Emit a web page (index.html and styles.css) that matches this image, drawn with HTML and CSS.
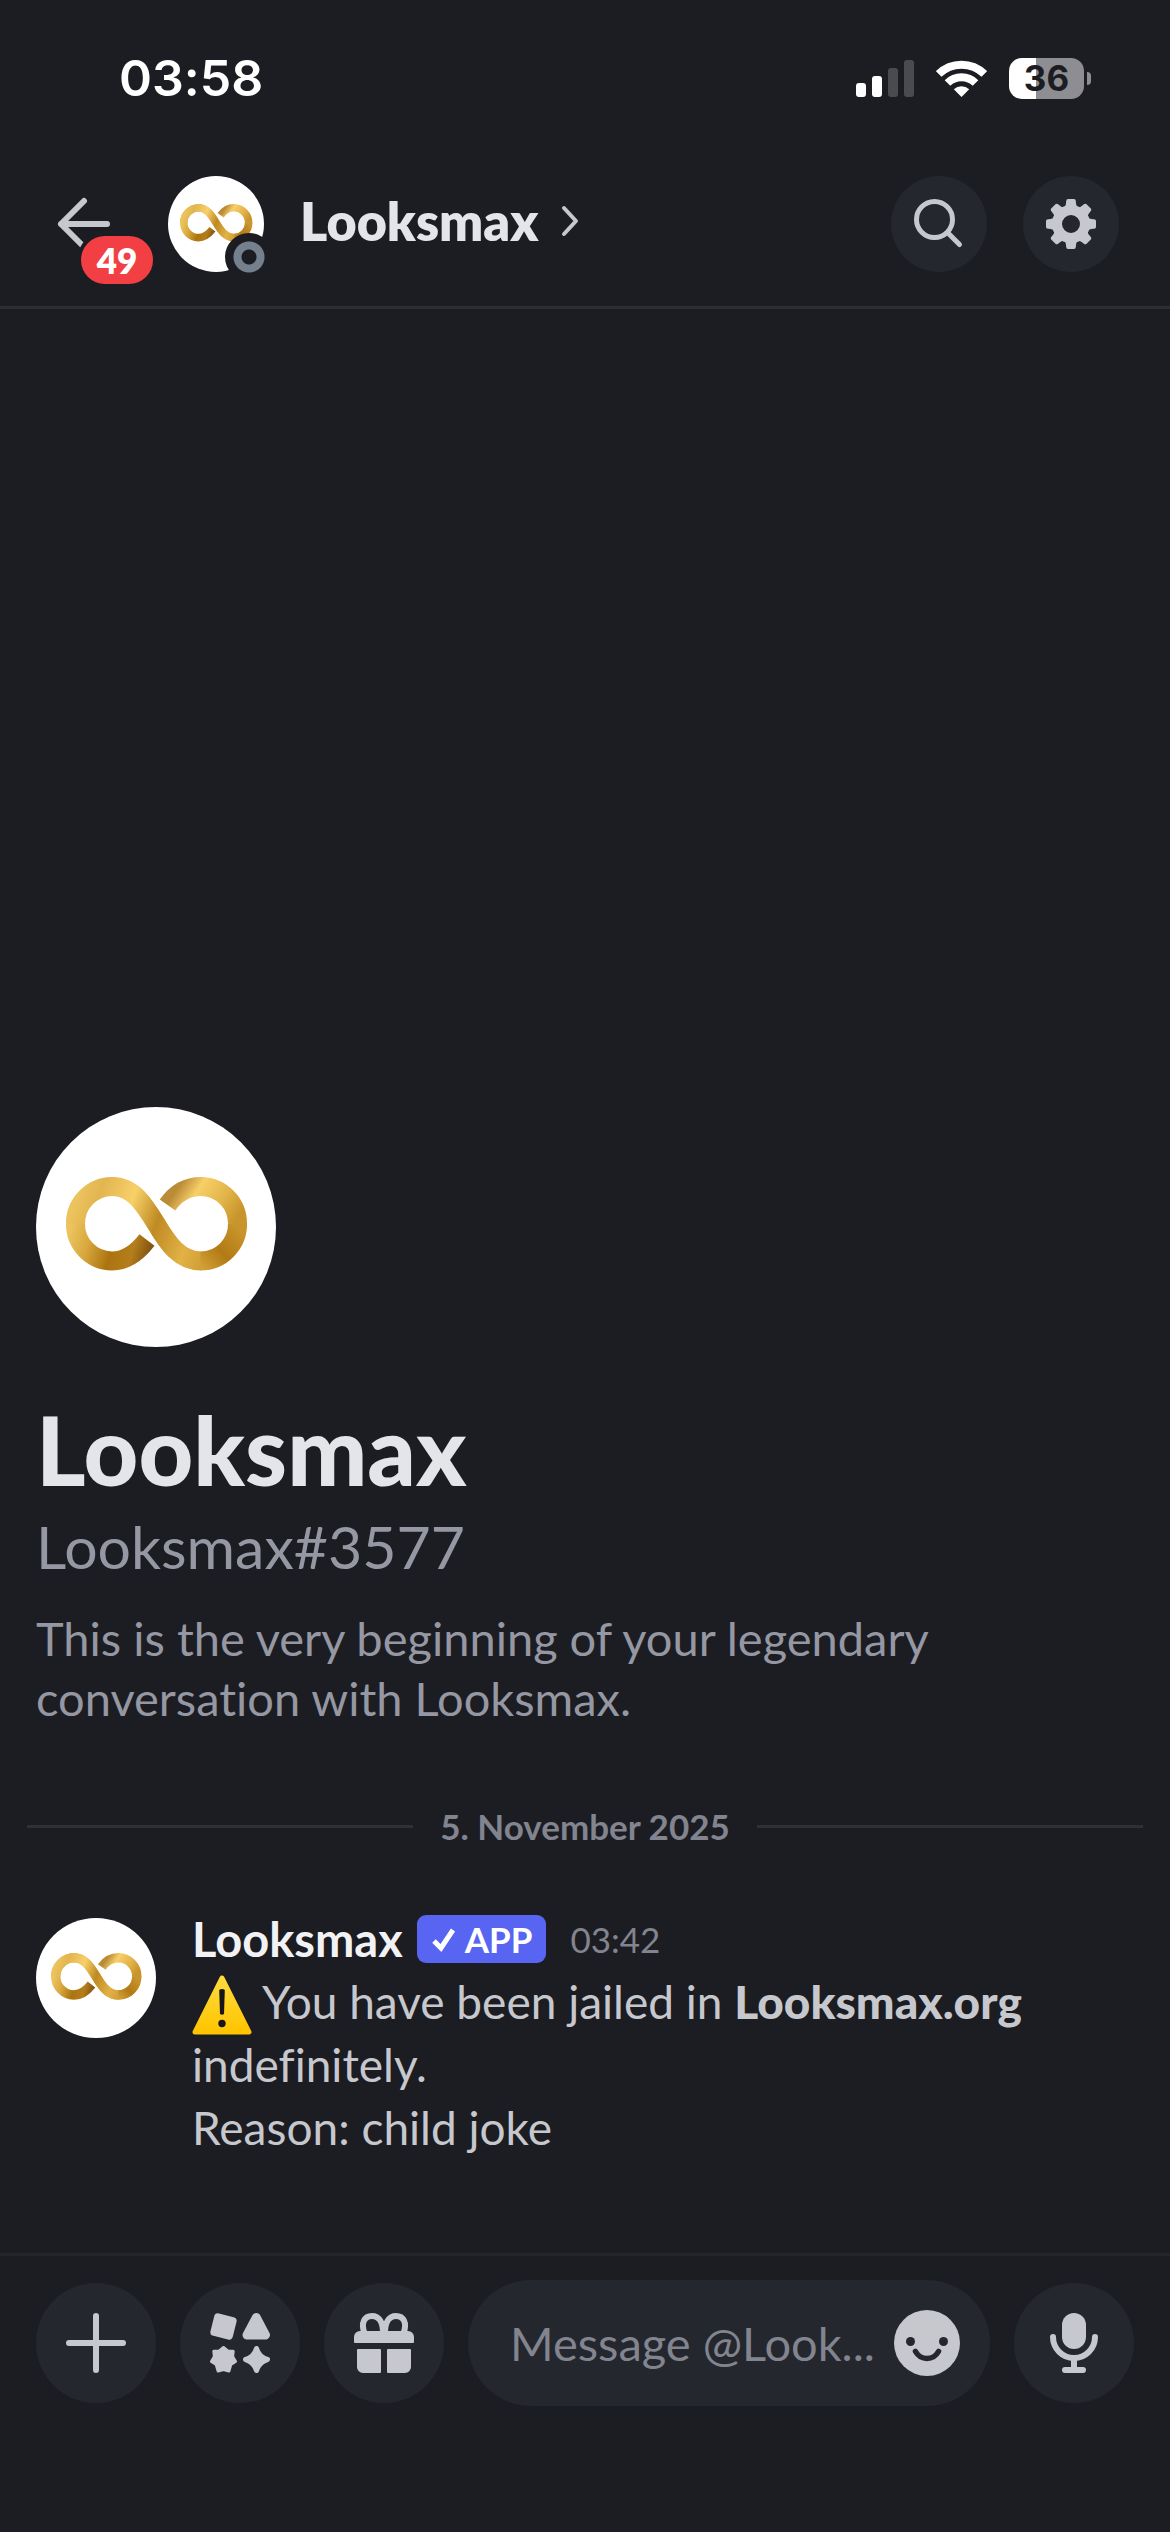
FILE: index.html
```html
<!DOCTYPE html>
<html lang="en">
<head>
<meta charset="utf-8">
<meta name="viewport" content="width=device-width, initial-scale=1">
<title>Looksmax</title>
<link rel="stylesheet" href="styles.css">
</head>
<body>
<svg class="defs" aria-hidden="true">
  <defs>
    <linearGradient id="gold-hook" gradientUnits="userSpaceOnUse" x1="36" y1="116" x2="115" y2="140">
      <stop offset="0" stop-color="#ecc45e"/><stop offset=".25" stop-color="#d9a83e"/><stop offset=".55" stop-color="#ab7410"/><stop offset=".8" stop-color="#b47e1c"/><stop offset="1" stop-color="#865510"/>
    </linearGradient>
    <linearGradient id="gold-band" gradientUnits="userSpaceOnUse" x1="36" y1="100" x2="168" y2="150">
      <stop offset="0" stop-color="#ecc45e"/><stop offset=".15" stop-color="#e2b550"/><stop offset=".38" stop-color="#f8d069"/><stop offset=".6" stop-color="#bf8a22"/><stop offset=".85" stop-color="#e2b246"/><stop offset="1" stop-color="#d2a036"/>
    </linearGradient>
    <linearGradient id="gold-low" gradientUnits="userSpaceOnUse" x1="160" y1="154" x2="206" y2="112">
      <stop offset="0" stop-color="#d2a036"/><stop offset=".4" stop-color="#b27a14"/><stop offset=".85" stop-color="#c8942c"/>
    </linearGradient>
    <linearGradient id="gold-high" gradientUnits="userSpaceOnUse" x1="202" y1="118" x2="128" y2="70">
      <stop offset=".05" stop-color="#c8942c"/><stop offset=".3" stop-color="#e2b44a"/><stop offset=".6" stop-color="#f7cf68"/><stop offset=".8" stop-color="#bb8c38"/>
    </linearGradient>
    <linearGradient id="warn" x1="0" y1="0" x2="0" y2="1">
      <stop offset="0" stop-color="#ffdc3c"/><stop offset="1" stop-color="#ffc400"/>
    </linearGradient>
    <symbol id="logo" viewBox="0 0 240 240">
      <rect width="240" height="240" fill="#fff"/>
      <g fill="none" stroke-width="19">
        <path stroke="#c8942c" stroke-width="18" d="M39.500 117A37 37 0 0 1 76 79.500C97 79.500 108 97 120 116.500C132 137 144 154 165 154A37 37 0 0 0 201.500 117"/>
        <path stroke="url(#gold-hook)" d="M111 133C101 146 90 154 76 154A37 37 0 0 1 39.500 116"/>
        <path stroke="url(#gold-band)" d="M39.500 117A37 37 0 0 1 76 79.500C97 79.500 108 97 120 116.500C132 137 144 154 165 154"/>
        <path stroke="url(#gold-low)" d="M164.500 154A37 37 0 0 0 201.500 116"/>
        <path stroke="url(#gold-high)" d="M201.500 117A37 37 0 0 0 165 79.500C152 79.500 140 86 131.500 98"/>
      </g>
    </symbol>
  </defs>
</svg>

<div class="app">
  <div class="status-bar">
    <time class="clock">03:58</time>
    <div class="indicators">
      <svg class="signal" viewBox="0 0 58 37" role="img" aria-label="Signal">
        <g fill="#fff"><rect y="23" width="10" height="14" rx="3"/><rect x="16" y="16" width="10" height="21" rx="3"/></g>
        <g fill="#4a4b4f"><rect x="32" y="8" width="10" height="29" rx="3"/><rect x="48" width="10" height="37" rx="3"/></g>
      </svg>
      <svg class="wifi" viewBox="0 0 51 37" role="img" aria-label="Wi-Fi">
        <g fill="none" stroke="#fff" stroke-width="8"><path d="M2.700 14A32.700 32.700 0 0 1 48.300 14"/><path d="M11.500 23A20 20 0 0 1 39.500 23"/></g>
        <path fill="#fff" d="M25.500 37L17.800 29.300A11.500 11.500 0 0 1 33.200 29.300Z"/>
      </svg>
      <div class="battery"><span class="battery-level">36</span><span class="battery-tip"></span></div>
    </div>
  </div>

  <header class="header">
    <button class="back" aria-label="Back">
      <svg viewBox="0 0 54 54" aria-hidden="true"><path d="M50 27H4M27 4L4 27L27 50" fill="none" stroke="#c7c8ce" stroke-width="6" stroke-linecap="round" stroke-linejoin="round"/></svg>
      <span class="unread">49</span>
    </button>
    <div class="header-avatar">
      <svg class="avatar" aria-hidden="true"><use href="#logo"/></svg>
      <span class="presence"></span>
    </div>
    <button class="title">
      <span>Looksmax</span>
      <svg viewBox="0 0 18 32" aria-hidden="true"><path d="M3 3L15 16L3 29" fill="none" stroke="#c7c8ce" stroke-width="4" stroke-linecap="round" stroke-linejoin="round"/></svg>
    </button>
    <div class="actions">
      <button class="round" aria-label="Search">
        <svg viewBox="0 0 96 96" aria-hidden="true"><g fill="none" stroke="#c7c8ce" stroke-width="5" stroke-linecap="round"><circle cx="43.500" cy="43.500" r="18"/><path d="M57 57L68.500 68.500"/></g></svg>
      </button>
      <button class="round" aria-label="Settings">
        <svg viewBox="-48 -48 96 96" aria-hidden="true">
          <circle r="14" fill="none" stroke="#c7c8ce" stroke-width="10"/>
          <g fill="#c7c8ce">
            <path id="tooth" d="M-8 -15Q-5 -17 -4.800 -23Q-4.700 -25 -3 -25H3Q4.700 -25 4.800 -23Q5 -17 8 -15Z"/>
            <use href="#tooth" transform="rotate(45)"/><use href="#tooth" transform="rotate(90)"/><use href="#tooth" transform="rotate(135)"/><use href="#tooth" transform="rotate(180)"/><use href="#tooth" transform="rotate(225)"/><use href="#tooth" transform="rotate(270)"/><use href="#tooth" transform="rotate(315)"/>
          </g>
        </svg>
      </button>
    </div>
  </header>

  <main class="chat">
    <section class="intro">
      <svg class="avatar intro-avatar" role="img" aria-label="Looksmax"><use href="#logo"/></svg>
      <h1>Looksmax</h1>
      <p class="tag">Looksmax#3577</p>
      <p class="about">This is the very beginning of your legendary<br>conversation with Looksmax.</p>
    </section>
    <div class="divider"><span>5. November 2025</span></div>
    <article class="message">
      <svg class="avatar message-avatar" aria-hidden="true"><use href="#logo"/></svg>
      <div class="message-body">
        <div class="byline">
          <span class="author">Looksmax</span>
          <span class="app-tag">
            <svg viewBox="0 0 26 26" aria-hidden="true"><path d="M3 15L10 22L22 4" fill="none" stroke="#fff" stroke-width="5"/></svg>
            APP
          </span>
          <time class="sent">03:42</time>
        </div>
        <p class="text"><svg class="emoji" viewBox="0 0 60 62" role="img" aria-label="Warning"><path d="M30 4L57 58H3Z" fill="url(#warn)" stroke="url(#warn)" stroke-width="5" stroke-linejoin="round"/><path d="M27.200 16Q30 14 32.800 16L32 40Q30 41.500 28 40Z" fill="#16161a"/><circle cx="30" cy="49.500" r="3.700" fill="#16161a"/></svg> You have been jailed in <strong>Looksmax.org</strong><br>indefinitely.<br>Reason: child joke</p>
      </div>
    </article>
  </main>

  <footer class="composer">
    <button class="round large" aria-label="Add attachment">
      <svg viewBox="0 0 60 60" aria-hidden="true"><path d="M30 3V57M3 30H57" stroke="#c7c8ce" stroke-width="6" stroke-linecap="round"/></svg>
    </button>
    <button class="round large" aria-label="Apps">
      <svg viewBox="0 0 60 60" aria-hidden="true"><g fill="#c7c8ce" stroke="#c7c8ce" stroke-linejoin="round">
        <rect x="4" y="4" width="19" height="19" rx="2" stroke-width="4" transform="rotate(14 13.500 13.500)"/>
        <path stroke-width="9" d="M46.300 4.500L55.500 22H37Z"/>
        <path stroke-width="3" d="M13.500 34.500L17.700 38L23.200 38.300L22.600 43.500L25.500 48.500L20.800 51.500L18.900 58L13.500 56.500L8.100 58L6.200 51.500L1.500 48.500L4.400 43.500L3.800 38.300L9.300 38Z"/>
        <path stroke-width="5" d="M46.500 35.500Q49 44 57.500 46.500Q49 49 46.500 57.500Q44 49 35.500 46.500Q44 44 46.500 35.500Z"/>
      </g></svg>
    </button>
    <button class="round large" aria-label="Send a gift">
      <svg viewBox="0 0 60 60" aria-hidden="true">
        <path d="M10.500 20C6.500 10 10.500 3 18 3C25 3 29 9 29 20M49.500 20C53.500 10 49.500 3 42 3C35 3 31 9 31 20" fill="none" stroke="#c7c8ce" stroke-width="6"/>
        <path fill="#c7c8ce" d="M6 18H54A6 6 0 0 1 60 24V29Q60 30 59 30H1Q0 30 0 29V24A6 6 0 0 1 6 18ZM4 36H26Q27 36 27 37V59Q27 60 26 60H9A6 6 0 0 1 3 54V37Q3 36 4 36ZM34 36H56Q57 36 57 37V54A6 6 0 0 1 51 60H34Q33 60 33 59V37Q33 36 34 36Z"/>
      </svg>
    </button>
    <div class="field">
      <input type="text" aria-label="Message" placeholder="Message @Look...">
      <button class="smiley" aria-label="Emoji">
        <svg viewBox="0 0 66 66" aria-hidden="true"><circle cx="33" cy="33" r="33" fill="#c7c8ce"/><g fill="#25272e"><circle cx="16.500" cy="31.500" r="4.500"/><circle cx="49.500" cy="31.500" r="4.500"/></g><path d="M21.500 41.500Q25.500 48.500 33 48.500Q40.500 48.500 44.500 41.500" fill="none" stroke="#25272e" stroke-width="5.500" stroke-linecap="round"/></svg>
      </button>
    </div>
    <button class="round large" aria-label="Record voice message">
      <svg viewBox="0 0 60 60" aria-hidden="true"><rect x="18" width="24" height="36" rx="12" fill="#c7c8ce"/><path d="M9 24A21 21 0 0 0 51 24M30 45V56M21 57H39" fill="none" stroke="#c7c8ce" stroke-width="6" stroke-linecap="round"/></svg>
    </button>
  </footer>
</div>
</body>
</html>
```
FILE: styles.css
```css
* {
  box-sizing: border-box;
}

body,
h1,
p {
  margin: 0;
}

body {
  background: #1c1d22;
  color: #c7c8ce;
  font-family: Lato, "Liberation Sans", sans-serif;
  font-size: 47px;
  font-variant-ligatures: none;
}

button {
  padding: 0;
  border: 0;
  background: none;
  color: inherit;
  font: inherit;
}

svg {
  display: block;
  flex: none;
}

.defs {
  position: absolute;
  width: 0;
  height: 0;
}

.app {
  display: flex;
  flex-direction: column;
  min-height: 100vh;
}

.avatar {
  width: 96px;
  height: 96px;
  border-radius: 50%;
}

/* Status bar */

.status-bar {
  display: flex;
  align-items: center;
  justify-content: space-between;
  height: 156px;
  padding: 0 79px 0 119px;
  font-family: Inter, "Liberation Sans", sans-serif;
}

.clock {
  color: #fff;
  font-size: 50px;
  font-weight: 600;
}

.indicators {
  display: flex;
  align-items: center;
  gap: 22px;
}

.signal {
  width: 58px;
  height: 37px;
}

.wifi {
  width: 51px;
  height: 37px;
}

.battery {
  display: flex;
  align-items: center;
  gap: 3px;
}

.battery-level {
  width: 75px;
  border-radius: 13px;
  background: linear-gradient(90deg, #fff 36%, #8e8e92 36%);
  color: #1c1d22;
  font-size: 35px;
  font-weight: 700;
  line-height: 41px;
  text-align: center;
}

.battery-tip {
  width: 4px;
  height: 13px;
  border-radius: 0 4px 4px 0;
  background: #8e8e92;
}

/* Header */

.header {
  display: flex;
  align-items: center;
  height: 153px;
  padding: 0 51px 15px 57px;
  border-bottom: 3px solid #2d2e33;
}

.back {
  position: relative;
  margin-right: 57px;
}

.back svg {
  width: 54px;
  height: 54px;
}

.unread {
  position: absolute;
  top: 39px;
  left: 24px;
  width: 72px;
  border-radius: 24px;
  background: #f23f43;
  box-shadow: 0 0 0 4px #1c1d22;
  color: #fff;
  font-size: 35px;
  font-weight: 800;
  line-height: 48px;
  text-align: center;
}

.header-avatar {
  position: relative;
}

.presence {
  position: absolute;
  right: -9px;
  bottom: -9px;
  width: 48px;
  height: 48px;
  border-radius: 50%;
  background: radial-gradient(circle, #1c1d22 7px, #75808e 8px, #75808e 15px, #1c1d22 16px);
}

.title {
  display: flex;
  align-items: center;
  gap: 22px;
  margin-left: 36px;
  padding-bottom: 6px;
  color: #e4e5e9;
  font-size: 52px;
  font-weight: 800;
  line-height: 60px;
}

.title svg {
  width: 18px;
  height: 32px;
}

.actions {
  display: flex;
  gap: 36px;
  margin-left: auto;
}

.round {
  display: flex;
  flex: none;
  align-items: center;
  justify-content: center;
  width: 96px;
  height: 96px;
  border-radius: 50%;
  background: #25272e;
}

.round svg {
  width: 96px;
  height: 96px;
}

.large {
  width: 120px;
  height: 120px;
}

.large svg {
  width: 60px;
  height: 60px;
}

/* Conversation */

.chat {
  display: flex;
  flex: 1;
  flex-direction: column;
  justify-content: flex-end;
  padding-bottom: 94px;
}

.intro {
  padding: 0 36px;
  color: #9597a3;
}

.intro-avatar {
  width: 240px;
  height: 240px;
  margin-bottom: 47px;
}

h1 {
  color: #e4e5e9;
  font-size: 95px;
  font-weight: 900;
  line-height: 110px;
}

.tag {
  margin: 7px 0 25px;
  font-size: 59px;
  line-height: 72px;
}

.about {
  line-height: 60px;
}

.divider {
  display: flex;
  align-items: center;
  gap: 27px;
  margin: 74px 27px 65px;
  color: #82848f;
  font-size: 35px;
  font-weight: 700;
  line-height: 48px;
}

.divider::before,
.divider::after {
  flex: 1;
  height: 3px;
  background: #2f3035;
  content: "";
}

.message {
  display: flex;
  align-items: flex-start;
  gap: 36px;
  padding: 0 36px;
}

.message-avatar {
  width: 120px;
  height: 120px;
  margin-top: 3px;
}

.byline {
  display: flex;
  align-items: center;
  margin-bottom: 7px;
  line-height: 48px;
}

.author {
  color: #f2f2f4;
  font-weight: 700;
}

.app-tag {
  display: flex;
  align-items: center;
  gap: 8px;
  margin: 0 24px 0 14px;
  padding: 0 14px;
  border-radius: 9px;
  background: #5865f2;
  color: #fff;
  font-size: 35px;
  font-weight: 700;
}

.app-tag svg {
  width: 26px;
  height: 26px;
}

.sent {
  color: #82848f;
  font-size: 35px;
}

.text {
  font-size: 46px;
  line-height: 63px;
}

.text strong {
  font-weight: 900;
}

.emoji {
  display: inline-block;
  width: 60px;
  height: 62px;
  margin: -8px 0;
  vertical-align: -9px;
}

/* Composer */

.composer {
  display: flex;
  align-items: center;
  gap: 24px;
  padding: 24px 36px 126px;
  border-top: 3px solid #25262b;
}

.field {
  display: flex;
  flex: 1;
  align-items: center;
  min-width: 0;
  height: 126px;
  padding: 0 30px 0 42px;
  border-radius: 63px;
  background: #25272e;
}

.field input {
  flex: 1;
  min-width: 0;
  padding: 0;
  border: 0;
  outline: 0;
  background: none;
  color: inherit;
  font: inherit;
  text-overflow: ellipsis;
}

.field input::placeholder {
  color: #82848f;
  opacity: 1;
}

.smiley svg {
  width: 66px;
  height: 66px;
}
```
